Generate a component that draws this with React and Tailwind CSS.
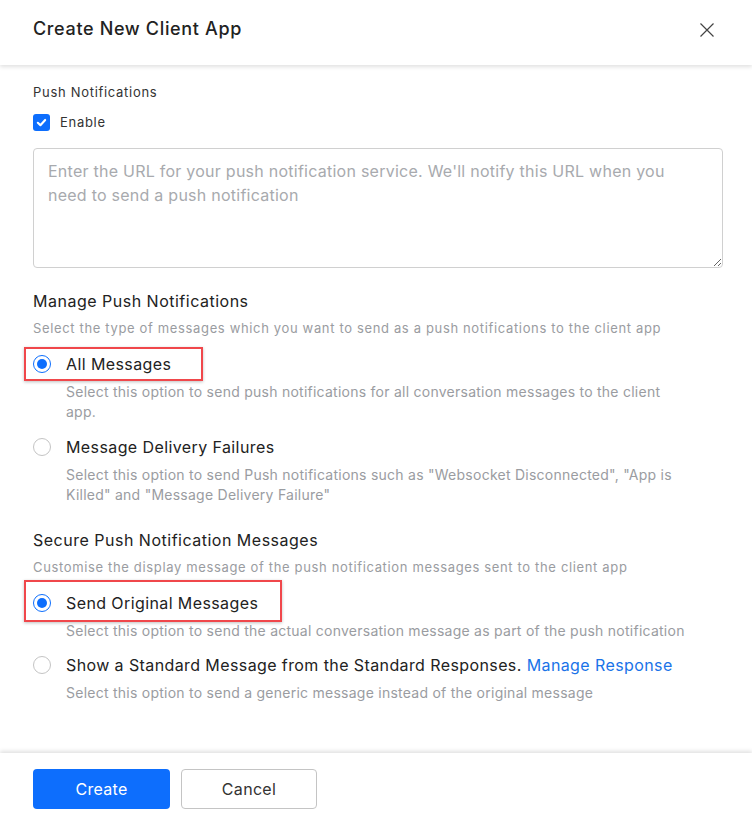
import React, { useState } from 'react';

function Radio({ checked }) {
  return (
    <span
      className={`flex h-[18px] w-[18px] shrink-0 items-center justify-center rounded-full border ${
        checked ? 'border-[#0d6efd]' : 'border-[#c4c4c4]'
      } bg-white`}
    >
      {checked && <span className="h-[10px] w-[10px] rounded-full bg-[#0d6efd]" />}
    </span>
  );
}

// red annotation box drawn over the highlighted option
function Option({ checked, label, desc, box, onSelect }) {
  return (
    <div>
      <div className="relative flex h-[32px] items-center">
        {box && (
          <div
            className={`pointer-events-none absolute -left-[9px] border-2 border-[#f0474b] shadow-[0_1px_3px_rgba(0,0,0,0.25)] ${box}`}
          />
        )}
        <button type="button" onClick={onSelect} className="flex items-center gap-[15px] text-left">
          <Radio checked={checked} />
          <span className="text-[16px] tracking-[0.4px] text-[#222]">{label}</span>
        </button>
      </div>
      <p className="mt-[2px] max-w-[654px] pl-[33px] text-[14px] leading-[20px] tracking-[0.25px] text-[#9a9ca1]">
        {desc}
      </p>
    </div>
  );
}

export default function App() {
  const [enabled, setEnabled] = useState(true);
  const [mode, setMode] = useState('all');
  const [secure, setSecure] = useState('original');

  return (
    <div className="flex h-[821px] w-[752px] flex-col bg-white font-['Inter',sans-serif] text-[#222]">
      <div className="relative z-10 flex h-[65px] shrink-0 items-center justify-between pl-[33px] pr-[38px] shadow-[0_2px_4px_rgba(0,0,0,0.12)]">
        <h1 className="-mt-[8px] text-[18px] font-medium tracking-[0.65px] text-[#222]">Create New Client App</h1>
        <button type="button" className="-mt-[5px] text-[#444]">
          <svg width="14" height="14" viewBox="0 0 14 14" fill="none" stroke="currentColor" strokeWidth="1.2">
            <path d="M0.5 0.5L13.5 13.5M13.5 0.5L0.5 13.5" />
          </svg>
        </button>
      </div>

      <div className="flex-1 pl-[33px] pr-[29px] pt-[18px]">
        <p className="text-[13px] leading-[18px] tracking-[0.7px] text-[#333]">Push Notifications</p>
        <label className="mt-[12px] flex items-center gap-[10px] text-[13px] tracking-[0.7px] text-[#333]">
          <button
            type="button"
            onClick={() => setEnabled(!enabled)}
            className={`flex h-[17px] w-[17px] items-center justify-center rounded-[3px] ${
              enabled ? 'bg-[#0d6efd]' : 'border border-[#c4c4c4] bg-white'
            }`}
          >
            {enabled && (
              <svg width="11" height="11" viewBox="0 0 12 12" fill="none" stroke="white" strokeWidth="2.3">
                <path d="M2 6.3L4.8 9L10 3.2" strokeLinecap="round" strokeLinejoin="round" />
              </svg>
            )}
          </button>
          Enable
        </label>

        <textarea
          className="mt-[15px] block h-[120px] w-full rounded-[4px] border border-[#d0d0d0] px-[14px] py-[10px] text-[16px] leading-[24px] tracking-[0.25px] text-[#222] placeholder:text-[#a8aaae] focus:outline-none"
          placeholder="Enter the URL for your push notification service. We'll notify this URL when you need to send a push notification"
        />

        <h2 className="mt-[22px] text-[16px] leading-[22px] tracking-[0.5px] text-[#222]">Manage Push Notifications</h2>
        <p className="mt-[7px] text-[13px] leading-[18px] tracking-[0.65px] text-[#9a9ca1]">
          Select the type of messages which you want to send as a push notifications to the client app
        </p>

        <div className="mt-[11px] flex flex-col gap-[9px]">
          <Option
            checked={mode === 'all'}
            onSelect={() => setMode('all')}
            box="-top-[1px] -bottom-[1px] w-[179px]"
            label="All Messages"
            desc="Select this option to send push notifications for all conversation messages to the client app."
          />
          <Option
            checked={mode === 'failures'}
            onSelect={() => setMode('failures')}
            label="Message Delivery Failures"
            desc={'Select this option to send Push notifications such as "Websocket Disconnected", "App is Killed" and "Message Delivery Failure"'}
          />
        </div>

        <h2 className="mt-[24px] text-[16px] leading-[22px] tracking-[0.5px] text-[#222]">
          Secure Push Notification Messages
        </h2>
        <p className="mt-[7px] text-[13px] leading-[18px] tracking-[0.65px] text-[#9a9ca1]">
          Customise the display message of the push notification messages sent to the client app
        </p>

        <div className="mt-[11px] flex flex-col gap-[8px]">
          <Option
            checked={secure === 'original'}
            onSelect={() => setSecure('original')}
            box="-top-[7px] -bottom-[3px] w-[258px]"
            label="Send Original Messages"
            desc="Select this option to send the actual conversation message as part of the push notification"
          />
          <Option
            checked={secure === 'standard'}
            onSelect={() => setSecure('standard')}
            label={
              <>
                Show a Standard Message from the Standard Responses.{' '}
                <span className="text-[#1a73e8]">Manage Response</span>
              </>
            }
            desc="Select this option to send a generic message instead of the original message"
          />
        </div>
      </div>

      <div className="flex h-[68px] shrink-0 items-start gap-[11px] px-[33px] pt-[16px] shadow-[0_-2px_4px_rgba(0,0,0,0.12)]">
        <button type="button" className="h-[40px] w-[137px] rounded-[4px] bg-[#0d6efd] text-[16px] tracking-[0.3px] text-white">
          Create
        </button>
        <button
          type="button"
          className="h-[40px] w-[136px] rounded-[4px] border border-[#c4c4c4] bg-white text-[16px] tracking-[0.3px] text-[#333]"
        >
          Cancel
        </button>
      </div>
    </div>
  );
}
